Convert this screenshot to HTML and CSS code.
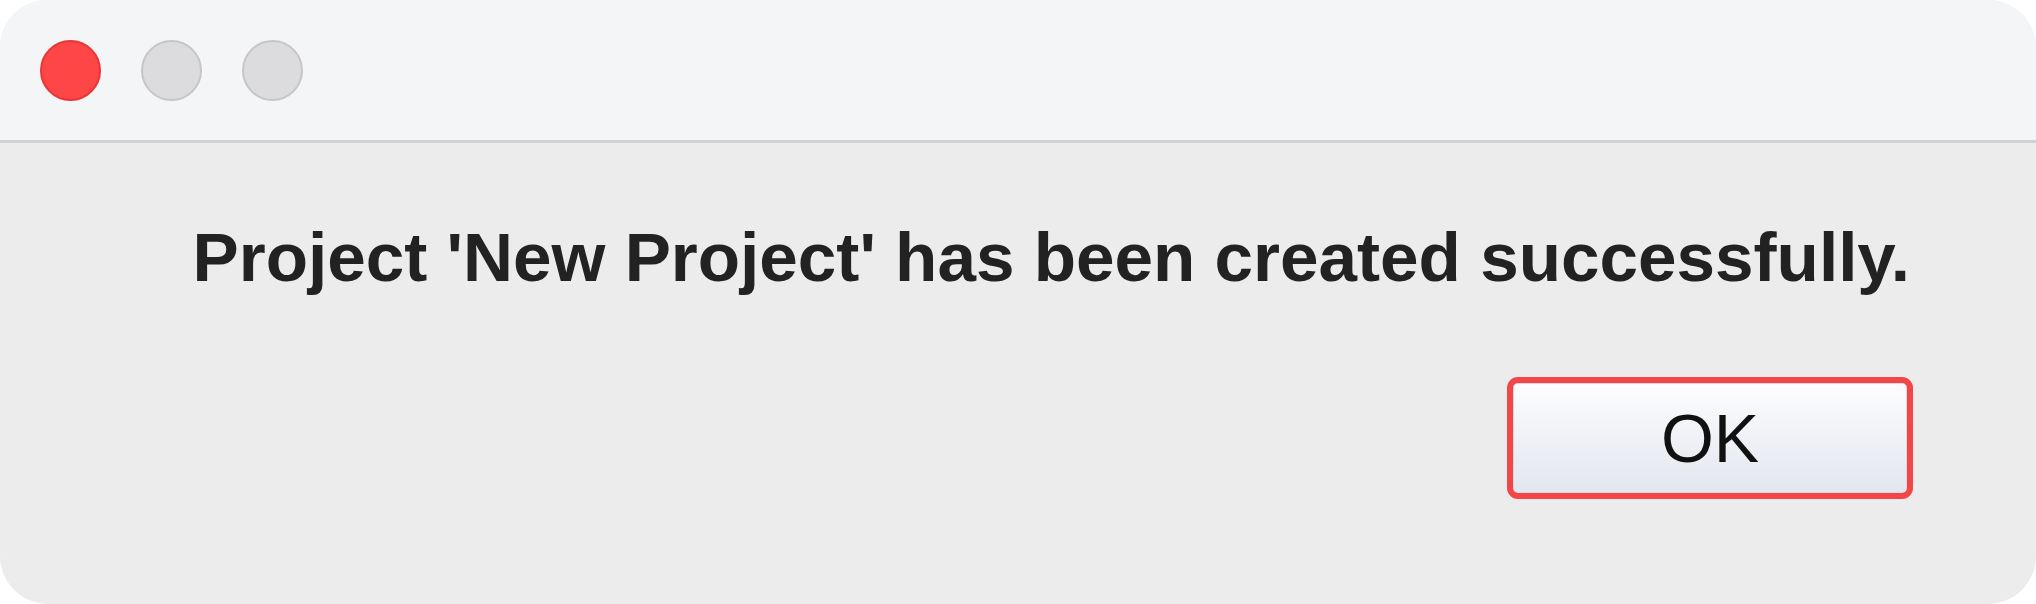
FILE: index.html
```html
<!DOCTYPE html>
<html>
<head>
<meta charset="utf-8">
<link rel="stylesheet" href="styles.css">
</head>
<body>
<div class="window">
  <div class="titlebar">
    <span class="light close"></span>
    <span class="light"></span>
    <span class="light"></span>
  </div>
  <div class="content">
    <p class="message">Project 'New Project' has been created successfully.</p>
    <div class="actions">
      <button class="ok">OK</button>
    </div>
  </div>
</div>
</body>
</html>
```
FILE: styles.css
```css
html, body {
  margin: 0;
  padding: 0;
  background: #ffffff;
}
.window {
  width: 2036px;
  height: 604px;
  border-radius: 48px;
  overflow: hidden;
  background: #ececec;
  display: flex;
  flex-direction: column;
}
.titlebar {
  height: 140px;
  background: #f4f5f7;
  border-bottom: 3px solid #d2d2d4;
  display: flex;
  align-items: center;
  gap: 40px;
  padding-left: 40px;
  box-sizing: content-box;
  flex-shrink: 0;
}
.light {
  display: block;
  flex-shrink: 0;
  width: 61px;
  height: 61px;
  box-sizing: border-box;
  border-radius: 50%;
  background: #dcdcde;
  border: 2px solid #c6c6c8;
}
.light.close {
  background: #ff4646;
  border-color: #e83434;
}
.content {
  flex: 1;
  display: flex;
  flex-direction: column;
  align-items: flex-end;
  padding: 80px 123px 0 0;
}
.message {
  margin: 0;
  font-family: "Liberation Sans", Arial, sans-serif;
  font-weight: bold;
  font-size: 69.25px;
  line-height: 1;
  color: #222222;
  padding-right: 3px;
}
.actions {
  margin-top: 85px;
}
.ok {
  display: block;
  width: 406px;
  height: 122px;
  box-sizing: border-box;
  border: 6px solid #f44646;
  border-radius: 11px;
  background: linear-gradient(#fdfdfe, #e2e6ee);
  font-family: "Liberation Sans", Arial, sans-serif;
  font-size: 68px;
  color: #111111;
  padding: 0;
  box-shadow: inset 0 0 0 1px #d6dbe6;
}
```
